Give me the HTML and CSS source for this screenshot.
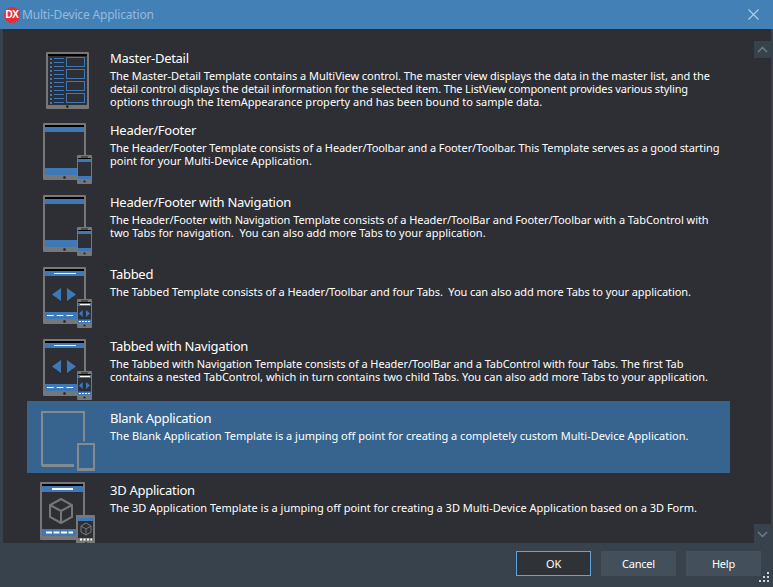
FILE: index.html
```html
<!DOCTYPE html>
<html lang="en">
<head>
<meta charset="utf-8">
<title>Multi-Device Application</title>
<link rel="stylesheet" href="styles.css">
</head>
<body>
<svg class="defs" width="0" height="0" aria-hidden="true">
  <defs>
    <g id="tablet">
      <rect x="16" y="10" width="43" height="57" rx="1" fill="#777"/>
      <rect x="18" y="12" width="39" height="50" fill="#2d2f34"/>
      <rect x="18" y="12" width="39" height="2" fill="#000"/>
      <circle cx="37.5" cy="64.5" r="1.3" fill="#222"/>
    </g>
    <g id="phone">
      <rect x="50" y="42" width="15" height="29" rx="1" fill="#777"/>
      <rect x="51" y="45" width="13" height="21" fill="#2d2f34"/>
      <rect x="51" y="45" width="13" height="1" fill="#000"/>
      <rect x="54" y="43.500" width="7" height="1" fill="#222"/>
      <circle cx="57.500" cy="68.500" r="1.100" fill="#222"/>
    </g>
    <g id="hf">
      <use href="#tablet"/>
      <rect x="18" y="14" width="39" height="5" fill="#3e78b6"/>
      <rect x="18" y="55" width="39" height="7" fill="#3e78b6"/>
      <use href="#phone"/>
      <rect x="51" y="46" width="13" height="3" fill="#3e78b6"/>
      <rect x="51" y="63" width="13" height="3" fill="#3e78b6"/>
    </g>
    <g id="tabbed">
      <use href="#tablet"/>
      <rect x="18" y="14" width="39" height="5" fill="#3e78b6"/>
      <rect x="27" y="16" width="22" height="1" fill="#fff"/>
      <path d="M25 37.500 34 31V44Z M40 31 49 37.500 40 44Z" fill="#3e78b6"/>
      <rect x="18" y="55" width="39" height="7" fill="#3e78b6"/>
      <path d="M20 58.500H49" stroke="#fff" stroke-width="1.200" stroke-dasharray="6.700 3" fill="none"/>
      <use href="#phone"/>
      <rect x="51" y="46" width="13" height="3" fill="#3e78b6"/>
      <rect x="53" y="47" width="10" height="1" fill="#fff"/>
      <path d="M52 56.500 55.700 53V60Z M59 53 63 56.500 59 60Z" fill="#3e78b6"/>
      <rect x="51" y="62.500" width="13" height="3.500" fill="#3e78b6"/>
      <path d="M52 64.500H63" stroke="#fff" stroke-dasharray="2 1" fill="none"/>
    </g>
  </defs>
</svg>
<div class="dialog">
  <header class="titlebar">
    <span class="logo">DX</span>
    <span class="title">Multi-Device Application</span>
    <svg class="close" width="11" height="11" viewBox="0 0 11 11"><path d="M.5.5 10.500 10.500M10.500.5.5 10.500" stroke="#b4cde4" stroke-width="1.100" fill="none"/></svg>
  </header>
  <main class="content">
    <div class="list">
      <article class="row">
        <svg class="icon" viewBox="0 0 83 72" width="83" height="72">
          <rect x="19" y="11" width="43" height="57" rx="1" fill="#777"/>
          <rect x="21" y="13" width="39" height="51" fill="#2d2f34"/>
          <rect x="21" y="13" width="39" height="2" fill="#000"/>
          <circle cx="40.300" cy="65.600" r="1.300" fill="#222"/>
          <path d="M24 17V63" stroke="#3e78b6" stroke-width="2" stroke-dasharray="2 2"/>
          <path d="M27 17.500H37M27 21.500H37M27 25.500H37M27 29.500H37M27 33.500H37M27 37.500H37M27 41.500H37M27 45.500H37M27 49.500H37M27 53.500H37M27 57.500H37M27 61.500H37" stroke="#3e78b6"/>
          <rect x="39.500" y="16.500" width="18" height="9" fill="none" stroke="#3e78b6"/>
          <rect x="39.500" y="28.500" width="18" height="9" fill="none" stroke="#3e78b6"/>
          <rect x="39.500" y="40.500" width="18" height="9" fill="none" stroke="#3e78b6"/>
          <rect x="39.500" y="52.500" width="18" height="9" fill="none" stroke="#3e78b6"/>
        </svg>
        <div class="text">
          <h2 class="name">Master-Detail</h2>
          <p class="desc"><span class="line tight-1">The Master-Detail Template contains a MultiView control. The master view displays the data in the master list, and the</span><span class="line tight-3">detail control displays the detail information for the selected item. The ListView component provides various styling</span><span class="line">options through the ItemAppearance property and has been bound to sample data.</span></p>
        </div>
      </article>
      <article class="row">
        <svg class="icon" viewBox="0 0 83 72" width="83" height="72"><use href="#hf"/></svg>
        <div class="text">
          <h2 class="name">Header/Footer</h2>
          <p class="desc"><span class="line tight-2">The Header/Footer Template consists of a Header/Toolbar and a Footer/Toolbar. This Template serves as a good starting</span><span class="line">point for your Multi-Device Application.</span></p>
        </div>
      </article>
      <article class="row">
        <svg class="icon" viewBox="0 0 83 72" width="83" height="72"><use href="#hf"/></svg>
        <div class="text">
          <h2 class="name">Header/Footer with Navigation</h2>
          <p class="desc"><span class="line tight-1">The Header/Footer with Navigation Template consists of a Header/ToolBar and Footer/Toolbar with a TabControl with</span><span class="line">two Tabs for navigation.&nbsp; You can also add more Tabs to your application.</span></p>
        </div>
      </article>
      <article class="row">
        <svg class="icon" viewBox="0 0 83 72" width="83" height="72"><use href="#tabbed"/></svg>
        <div class="text">
          <h2 class="name">Tabbed</h2>
          <p class="desc"><span class="line tight-2">The Tabbed Template consists of a Header/Toolbar and four Tabs.&nbsp; You can also add more Tabs to your application.</span></p>
        </div>
      </article>
      <article class="row">
        <svg class="icon" viewBox="0 0 83 72" width="83" height="72"><use href="#tabbed"/></svg>
        <div class="text">
          <h2 class="name">Tabbed with Navigation</h2>
          <p class="desc"><span class="line tight-2">The Tabbed with Navigation Template consists of a Header/ToolBar and a TabControl with four Tabs. The first Tab</span><span class="line">contains a nested TabControl, which in turn contains two child Tabs. You can also add more Tabs to your application.</span></p>
        </div>
      </article>
      <article class="row selected">
        <svg class="icon" viewBox="0 0 83 72" width="83" height="72">
          <path d="M47 64H15V11H57V40.500" fill="none" stroke="#828a91" stroke-width="2"/>
          <path d="M47 64.500H15" fill="none" stroke="#828a91" stroke-width="3"/>
          <path d="M51 68V43H67V68" fill="none" stroke="#828a91" stroke-width="2"/>
          <rect x="50" y="67" width="18" height="3" fill="#828a91"/>
        </svg>
        <div class="text">
          <h2 class="name">Blank Application</h2>
          <p class="desc"><span class="line">The Blank Application Template is a jumping off point for creating a completely custom Multi-Device Application.</span></p>
        </div>
      </article>
      <article class="row">
        <svg class="icon" viewBox="0 0 83 72" width="83" height="72">
          <rect x="13" y="9" width="45" height="58" rx="1" fill="#777"/>
          <rect x="15" y="11" width="41" height="52" fill="#2d2f34"/>
          <rect x="15" y="11" width="41" height="2" fill="#000"/>
          <rect x="15" y="13" width="41" height="6" fill="#3e78b6"/>
          <rect x="25" y="15" width="21" height="2" fill="#fff"/>
          <rect x="15" y="56" width="41" height="7" fill="#3e78b6"/>
          <path d="M19 59.500H46" stroke="#fff" stroke-width="2" stroke-dasharray="6 1.500" fill="none"/>
          <path d="M34 26 45 32V44L34 50 23 44V32ZM23 32 34 38 45 32M34 38V50" fill="none" stroke="#777" stroke-width="2"/>
          <rect x="49" y="42" width="19" height="30" rx="1" fill="#777"/>
          <rect x="51" y="45" width="15" height="20" fill="#2d2f34"/>
          <rect x="51" y="45" width="15" height="3" fill="#3e78b6"/>
          <path d="M59 50 64 53V59L59 62 54 59V53ZM54 53 59 56 64 53M59 56V62" fill="none" stroke="#777"/>
          <path d="M53 66.500H65" stroke="#fff" stroke-dasharray="2 1.500" stroke-width="2" fill="none"/>
          <circle cx="59" cy="70" r="1" fill="#222"/>
        </svg>
        <div class="text">
          <h2 class="name">3D Application</h2>
          <p class="desc"><span class="line">The 3D Application Template is a jumping off point for creating a 3D Multi-Device Application based on a 3D Form.</span></p>
        </div>
      </article>
    </div>
    <div class="scrollbar">
      <svg class="arrow" width="17" height="17" viewBox="0 0 17 17"><path d="M4 11 8.500 6.500 13 11" fill="none" stroke="#6f7b85" stroke-width="1.500"/></svg>
      <div class="thumb"></div>
      <svg class="arrow" width="17" height="19" viewBox="0 0 17 19"><path d="M4 8 8.500 12.500 13 8" fill="none" stroke="#6f7b85" stroke-width="1.500"/></svg>
    </div>
  </main>
  <footer class="footer">
    <button class="btn default">OK</button>
    <button class="btn">Cancel</button>
    <button class="btn">Help</button>
    <svg class="grip" width="11" height="11" viewBox="0 0 11 11"><path d="M8 0h2v2H8zM4 4h2v2H4zM8 4h2v2H8zM0 8h2v2H0zM4 8h2v2H4zM8 8h2v2H8z" fill="#cfd3d6"/></svg>
  </footer>
</div>
</body>
</html>
```
FILE: styles.css
```css
* { box-sizing: border-box; }
html, body { margin: 0; height: 100%; }
body {
  background: #37424c;
  font-family: "Noto Sans", "Open Sans", sans-serif;
  color: #fff;
  overflow: hidden;
}
.defs { position: absolute; }
.dialog { width: 773px; height: 587px; display: flex; flex-direction: column; position: relative; }
.titlebar {
  height: 29px;
  flex: none;
  background: #4380b6;
  display: flex;
  align-items: center;
  padding: 0 14px 0 4px;
}
.logo {
  width: 16px; height: 16px; border-radius: 50%;
  background: #e62d35; color: #fff;
  font: bold 10px/16px "Liberation Sans", sans-serif;
  text-align: center;
  letter-spacing: -.4px;
  flex: none;
}
.title { margin-left: 2px; font-size: 12px; letter-spacing: -.18px; color: #93bbdd; flex: 1; }
.content { height: 514px; flex: none; display: flex; padding: 0 2px 0 3px; }
.list {
  flex: none; width: 751px; background: #2d2f34;
  padding: 12px 24px 0;
  overflow: hidden;
}
.row { height: 72px; display: flex; flex: none; }
.row.selected { background: #36648f; }
.icon { flex: none; display: block; }
.text { flex: 1; min-width: 0; padding-top: 8px; }
.name { margin: 0; font-size: 13px; font-weight: 400; line-height: 18px; letter-spacing: -.28px; white-space: nowrap; }
.desc { margin: 2px 0 0; font-size: 11px; line-height: 13px; white-space: nowrap; }
.line { display: block; }
.tight-1 { letter-spacing: -.05px; }
.tight-2 { letter-spacing: -.075px; }
.tight-3 { letter-spacing: -.14px; }
.scrollbar {
  flex: none; width: 17px; background: #2d2f34;
  padding-top: 12px;
  display: flex; flex-direction: column;
}
.arrow { flex: none; display: block; background: #37424c; }
.thumb { flex: 1; background: #2d2f34; }
.footer {
  flex: 1;
  display: flex;
  align-items: flex-start;
  justify-content: flex-end;
  gap: 10px;
  padding: 8px 12px 0 0;
  position: relative;
}
.btn {
  width: 75px; height: 25px;
  background: #434f5a;
  border: 1px solid #434f5a;
  color: #fff;
  font: 11px "Noto Sans", "Open Sans", sans-serif;
  letter-spacing: -.2px;
  padding: 0;
}
.btn.default { background: #2f3338; border-color: #5ea5e0; }
.grip { position: absolute; right: 3px; bottom: 4px; }
```
